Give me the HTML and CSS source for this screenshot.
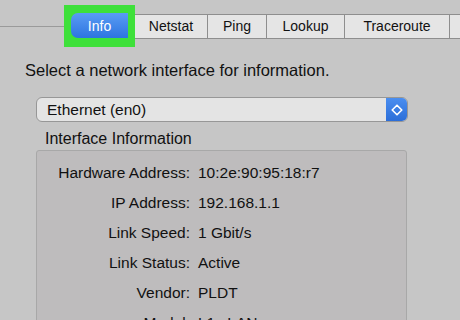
FILE: index.html
```html
<!DOCTYPE html>
<html>
<head>
    <title>Network Utility</title>
    <link rel="stylesheet" href="styles.css">
</head>
<body>
    <div class="tabbar">
        <div class="tabline"></div>
        <div class="highlight">
            <div class="tab active">Info</div>
        </div>
        <div class="tab netstat">Netstat</div>
        <div class="tab ping">Ping</div>
        <div class="tab lookup">Lookup</div>
        <div class="tab trace">Traceroute</div>
        <div class="tab rest"></div>
    </div>

    <p class="prompt">Select a network interface for information.</p>

    <div class="select">
        <span class="select-text">Ethernet (en0)</span>
        <span class="select-btn">
            <svg width="12" height="12" viewBox="0 0 12 12">
                <path d="M6 1.2 L10.8 6 L6 10.8 L1.2 6 Z" fill="none" stroke="#ffffff" stroke-width="1.6" stroke-linejoin="round"/>
            </svg>
        </span>
    </div>

    <div class="group-title">Interface Information</div>
    <div class="group">
        <div class="row"><span class="label">Hardware Address:</span><span class="value">10:2e:90:95:18:r7</span></div>
        <div class="row"><span class="label">IP Address:</span><span class="value">192.168.1.1</span></div>
        <div class="row"><span class="label">Link Speed:</span><span class="value">1 Gbit/s</span></div>
        <div class="row"><span class="label">Link Status:</span><span class="value">Active</span></div>
        <div class="row"><span class="label">Vendor:</span><span class="value">PLDT</span></div>
        <div class="row"><span class="label">Model:</span><span class="value">L1c LAN</span></div>
    </div>
</body>
</html>
```

FILE: styles.css
```css
body {
    font-family: "Liberation Sans", Arial, sans-serif;
    margin: 0;
    padding: 0;
    background-color: #c6c6c6;
    color: #111111;
    overflow: hidden;
}
.tabbar {
    display: flex;
    align-items: center;
    margin-top: 5px;
    height: 42px;
    white-space: nowrap;
}
.tabline {
    flex: 0 0 64px;
    height: 1px;
    background-color: #9a9a9a;
}
.highlight {
    flex: 0 0 auto;
    border: 7px solid #3ee03a;
    border-top-width: 8px;
    border-bottom-width: 9px;
    background-color: #3ee03a;
}
.tab {
    box-sizing: border-box;
    height: 25px;
    display: flex;
    align-items: center;
    justify-content: center;
    font-size: 14px;
    background-color: #e5e5e5;
    border-top: 1px solid #8e8e8e;
    border-bottom: 1px solid #8e8e8e;
    border-left: 1px solid #8e8e8e;
    color: #111111;
}
.tab.active {
    width: 57px;
    border: none;
    border-radius: 7px 0 0 7px;
    background: linear-gradient(#5a9cf4, #2d74e0);
    color: #ffffff;
}
.netstat {
    flex: 0 0 72px;
    border-left: none;
}
.ping {
    flex: 0 0 59px;
}
.lookup {
    flex: 0 0 78px;
}
.trace {
    flex: 0 0 105px;
}
.rest {
    flex: 1 0 20px;
}
.prompt {
    font-size: 16.5px;
    line-height: 18px;
    margin: 14px 0 0 25px;
}
.select {
    box-sizing: border-box;
    display: flex;
    align-items: center;
    width: 372px;
    height: 25px;
    margin: 18px 0 0 36px;
    background-color: #e4e4e4;
    border: 1px solid #979797;
    border-radius: 6px;
    overflow: hidden;
}
.select-text {
    flex: 1;
    font-size: 15.5px;
    padding-left: 10px;
}
.select-btn {
    flex: 0 0 21px;
    height: 100%;
    display: flex;
    align-items: center;
    justify-content: center;
    background: linear-gradient(#4a8ef0, #2c6ed8);
}
.group-title {
    font-size: 16px;
    line-height: 18px;
    margin: 8px 0 0 45px;
}
.group {
    box-sizing: border-box;
    width: 371px;
    margin: 2px 0 0 36px;
    padding-top: 7px;
    background-color: #bebcbd;
    border: 1px solid #a8a8a8;
    border-radius: 3px;
    font-size: 15.5px;
}
.row {
    display: flex;
    gap: 8px;
    line-height: 30px;
}
.label {
    flex: 0 0 153px;
    text-align: right;
}
```
